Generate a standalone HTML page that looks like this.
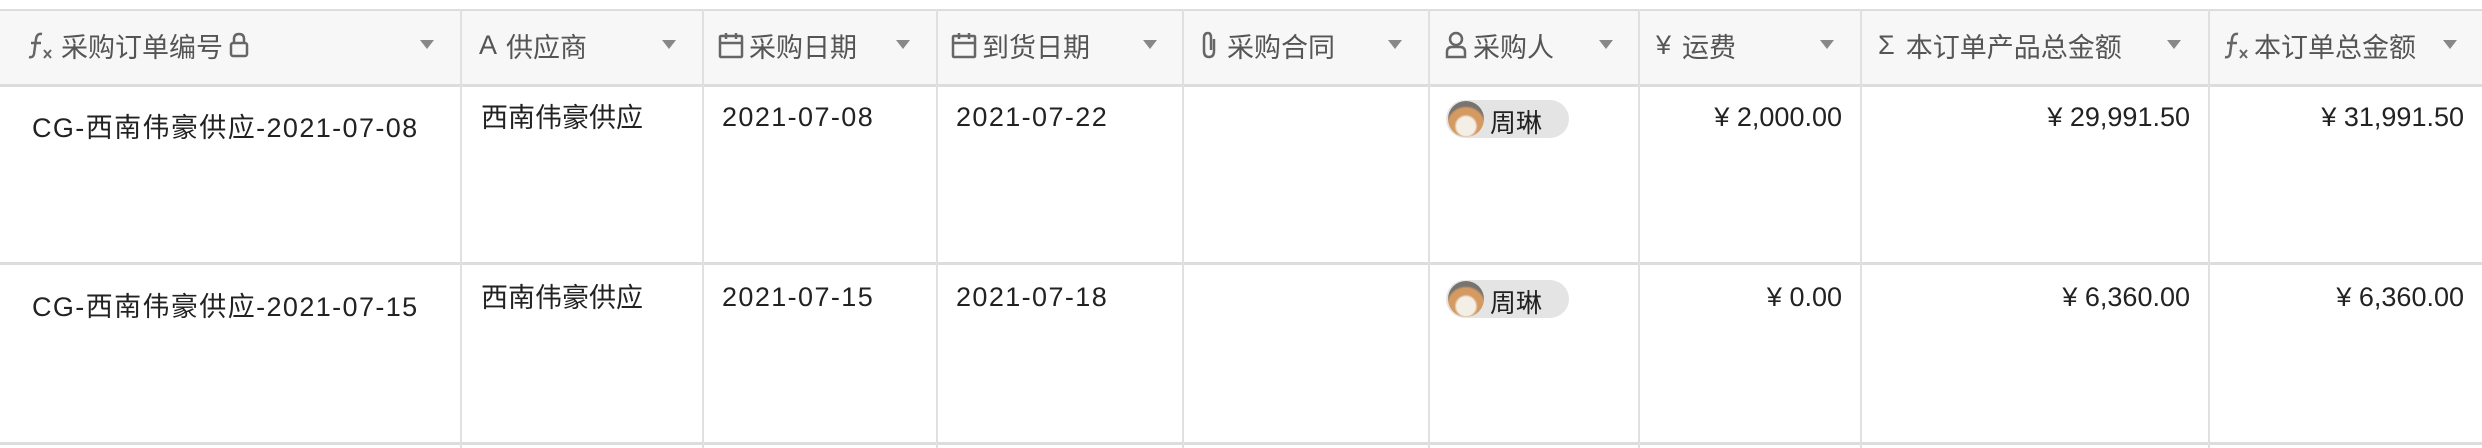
<!DOCTYPE html><html><head><meta charset="utf-8"><style>
body{margin:0;width:2482px;height:448px;background:#fff;position:relative;overflow:hidden;font-family:"Liberation Sans","Noto Sans CJK SC",sans-serif}
.a{position:absolute;white-space:nowrap}
.h{position:absolute;top:9px;left:0;width:2482px;height:73px;background:#f7f7f7;border-top:2px solid #ddd;border-bottom:3px solid #ddd}
.v{position:absolute;top:9px;width:2px;height:439px;background:#e0e0e0}
.r{position:absolute;left:0;width:2482px;height:3px;background:#ddd}
.ht{font-size:27px;color:#555;top:27px;display:flex;align-items:center;gap:5px;height:36px}
.ht svg{flex:none}
.tri{position:absolute;top:40px;width:0;height:0;border-left:7px solid transparent;border-right:7px solid transparent;border-top:9px solid #888}
.c{font-size:27px;color:#222;letter-spacing:1.4px}
.s{font-size:27px;color:#222}
.n{font-size:27px;color:#222;text-align:right}
.chip{position:absolute;left:1446px;width:123px;height:38px;border-radius:19px;background:#e4e4e4}
.av{position:absolute;left:2px;top:1px;width:36px;height:36px;border-radius:50%;background:radial-gradient(circle at 50% 70%,#f3eee6 0 30%,#d49a62 38% 58%,#77736f 66%)}
.chip span{position:absolute;left:44px;top:3px;font-size:26px;color:#222}
</style></head><body>
<div class="h"></div>
<div class="r" style="top:262px"></div>
<div class="r" style="top:442px"></div>
<div class="v" style="left:460px"></div><div class="v" style="left:702px"></div><div class="v" style="left:936px"></div><div class="v" style="left:1182px"></div><div class="v" style="left:1428px"></div><div class="v" style="left:1638px"></div><div class="v" style="left:1860px"></div><div class="v" style="left:2208px"></div>

<div class="a ht" style="left:28px"><svg width="28" height="30" viewBox="0 0 28 30" fill="none" stroke="#666" stroke-width="2.5"><path d="M14 4 Q9 3 8 9 L6 24 Q5 28 1 27"/><path d="M3 13 H13"/><path d="M16 20 L23 28 M23 20 L16 28" stroke-width="2"/></svg>采购订单编号<svg width="22" height="28" viewBox="0 0 22 28" fill="none" stroke="#666" stroke-width="2.5"><rect x="3" y="12" width="16" height="13" rx="2"/><path d="M6 12 V8 Q6 3 11 3 Q16 3 16 8 V12"/></svg></div>
<div class="a ht" style="left:479px"><span style="font-family:'Liberation Sans';margin-right:4px">A</span>供应商</div>
<div class="a ht" style="left:718px"><svg width="26" height="28" viewBox="0 0 26 28" fill="none" stroke="#666" stroke-width="2.5"><rect x="2" y="5" width="22" height="21" rx="1"/><path d="M2 12 H24 M8 2 V8 M18 2 V8"/></svg>采购日期</div>
<div class="a ht" style="left:951px"><svg width="26" height="28" viewBox="0 0 26 28" fill="none" stroke="#666" stroke-width="2.5"><rect x="2" y="5" width="22" height="21" rx="1"/><path d="M2 12 H24 M8 2 V8 M18 2 V8"/></svg>到货日期</div>
<div class="a ht" style="left:1198px"><svg width="24" height="30" viewBox="0 0 24 30" fill="none" stroke="#666" stroke-width="2.5"><path d="M16 9 V21 Q16 27 11 27 Q6 27 6 21 V8 Q6 3 10 3 Q13 3 13 8 V20"/></svg>采购合同</div>
<div class="a ht" style="left:1444px"><svg width="24" height="30" viewBox="0 0 24 30" fill="none" stroke="#666" stroke-width="2.5"><circle cx="12" cy="9" r="6"/><path d="M3 27 V22 Q3 17 8 17 H16 Q21 17 21 22 V27 Z"/></svg>采购人</div>
<div class="a ht" style="left:1656px"><span style="margin-right:6px">¥</span>运费</div>
<div class="a ht" style="left:1878px"><span style="margin-right:6px">Σ</span>本订单产品总金额</div>
<div class="a ht" style="left:2224px;gap:2px"><svg width="28" height="30" viewBox="0 0 28 30" fill="none" stroke="#666" stroke-width="2.5"><path d="M14 4 Q9 3 8 9 L6 24 Q5 28 1 27"/><path d="M3 13 H13"/><path d="M16 20 L23 28 M23 20 L16 28" stroke-width="2"/></svg>本订单总金额</div>
<div class="tri" style="left:420px"></div><div class="tri" style="left:662px"></div><div class="tri" style="left:896px"></div><div class="tri" style="left:1143px"></div><div class="tri" style="left:1388px"></div><div class="tri" style="left:1599px"></div><div class="tri" style="left:1820px"></div><div class="tri" style="left:2167px"></div><div class="tri" style="left:2443px"></div>

<div class="a c" style="left:32px;top:106px">CG-西南伟豪供应-2021-07-08</div>
<div class="a s" style="left:481px;top:96px">西南伟豪供应</div>
<div class="a c" style="left:722px;top:102px">2021-07-08</div>
<div class="a c" style="left:956px;top:102px">2021-07-22</div>
<div class="chip" style="top:100px"><div class="av"></div><span>周琳</span></div>
<div class="a n" style="right:640px;top:102px">¥ 2,000.00</div>
<div class="a n" style="right:292px;top:102px">¥ 29,991.50</div>
<div class="a n" style="right:18px;top:102px">¥ 31,991.50</div>

<div class="a c" style="left:32px;top:285px">CG-西南伟豪供应-2021-07-15</div>
<div class="a s" style="left:481px;top:276px">西南伟豪供应</div>
<div class="a c" style="left:722px;top:282px">2021-07-15</div>
<div class="a c" style="left:956px;top:282px">2021-07-18</div>
<div class="chip" style="top:280px"><div class="av"></div><span>周琳</span></div>
<div class="a n" style="right:640px;top:282px">¥ 0.00</div>
<div class="a n" style="right:292px;top:282px">¥ 6,360.00</div>
<div class="a n" style="right:18px;top:282px">¥ 6,360.00</div>
</body></html>
